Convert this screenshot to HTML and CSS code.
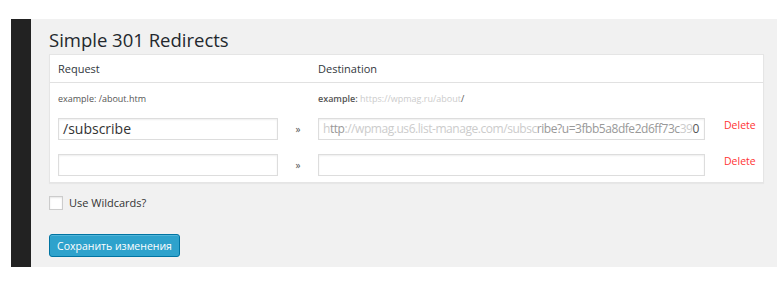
FILE: index.html
```html
<!DOCTYPE html>
<html lang="ru">
  <head>
    <meta charset="UTF-8" />
    <meta name="viewport" content="width=device-width, initial-scale=1.0" />
    <title>Simple 301 Redirects</title>
    <link rel="stylesheet" href="styles.css">
  </head>
  <body>
    <div class="screen">
      <div class="sidebar"></div>
      <div class="content">
        <h1>Simple 301 Redirects</h1>

        <!-- таблица редиректов -->
        <div class="box">
          <div class="row head">
            <div>Request</div>
            <div></div>
            <div>Destination</div>
            <div></div>
          </div>
          <div class="row example">
            <div>example: /about.htm</div>
            <div></div>
            <div><b>example:</b> <span class="light">https://wpmag.ru/about</span>/</div>
            <div></div>
          </div>
          <div class="row entry">
            <div class="field">/subscribe</div>
            <div class="sep">&raquo;</div>
            <div class="field dest"><span class="light">h</span><span class="mid">ttp</span><span class="light">://wpmag.us6.list-manage.com/subsc</span><span class="mid">ribe?u=3fbb5a8dfe2d6ff73c</span><span class="light">39</span>0</div>
            <div class="delete">Delete</div>
          </div>
          <div class="row entry">
            <div class="field"></div>
            <div class="sep">&raquo;</div>
            <div class="field dest"></div>
            <div class="delete">Delete</div>
          </div>
        </div>

        <label class="check"><span class="box-check"></span>Use Wildcards?</label>

        <button class="save">Сохранить изменения</button>
      </div>
    </div>
  </body>
</html>
```

FILE: styles.css
```css
body {
  margin: 0;
  background: #fff;
  font-family: "Open Sans", "Noto Sans", sans-serif;
  color: #333;
}
.screen {
  display: flex;
  height: 248px;
  margin: 19px 5px 0 11px;
}
.sidebar {
  width: 20px;
  background: #222;
}
.content {
  flex: 1;
  background: #f1f1f1;
  padding: 6px 13px 0 18px;
}
h1 {
  margin: 0;
  font-size: 18.5px;
  line-height: 29px;
  font-weight: 400;
  color: #23282d;
}
.box {
  background: #fff;
  border: 1px solid #e5e5e5;
  box-shadow: 0 1px 1px rgba(0, 0, 0, 0.04);
  height: 127px;
}
.row {
  display: grid;
  grid-template-columns: 220px 40px 387px 1fr;
  align-items: center;
  padding-left: 8px;
}
.head {
  height: 27px;
  border-bottom: 1px solid #e1e1e1;
  font-size: 11px;
  color: #32373c;
}
.example {
  margin-top: 8px;
  height: 14px;
  font-size: 9px;
  color: #555;
}
.example b {
  font-weight: 600;
}
.light {
  color: #ccc;
}
.mid {
  color: #999;
}
.entry {
  margin-top: 13px;
  height: 22px;
}
.entry + .entry {
  margin-top: 14px;
}
.field {
  height: 20px;
  border: 1px solid #ddd;
  box-shadow: inset 0 1px 2px rgba(0, 0, 0, 0.07);
  font-size: 14px;
  line-height: 20px;
  padding: 0 4px;
  white-space: nowrap;
  overflow: hidden;
}
.dest {
  font-size: 12px;
  letter-spacing: -0.45px;
  color: #555;
}
.sep {
  text-align: center;
  font-size: 10px;
  color: #555;
}
.delete {
  padding-left: 19px;
  font-size: 10.5px;
  color: #f33;
  margin-top: -8px;
}
.check {
  display: flex;
  align-items: center;
  gap: 6px;
  margin-top: 12px;
  font-size: 11px;
  color: #333;
}
.box-check {
  width: 12px;
  height: 12px;
  background: #fff;
  border: 1px solid #ccc;
  box-shadow: inset 0 1px 2px rgba(0, 0, 0, 0.1);
}
.save {
  display: block;
  margin-top: 24px;
  height: 23px;
  width: 131px;
  padding: 0;
  white-space: nowrap;
  background: #2ea2cc;
  border: 1px solid #0074a2;
  border-radius: 3px;
  box-shadow: inset 0 1px 0 rgba(120, 200, 230, 0.5);
  color: #fff;
  font-family: "Open Sans", "Noto Sans", sans-serif;
  font-size: 10.5px;
}
```
